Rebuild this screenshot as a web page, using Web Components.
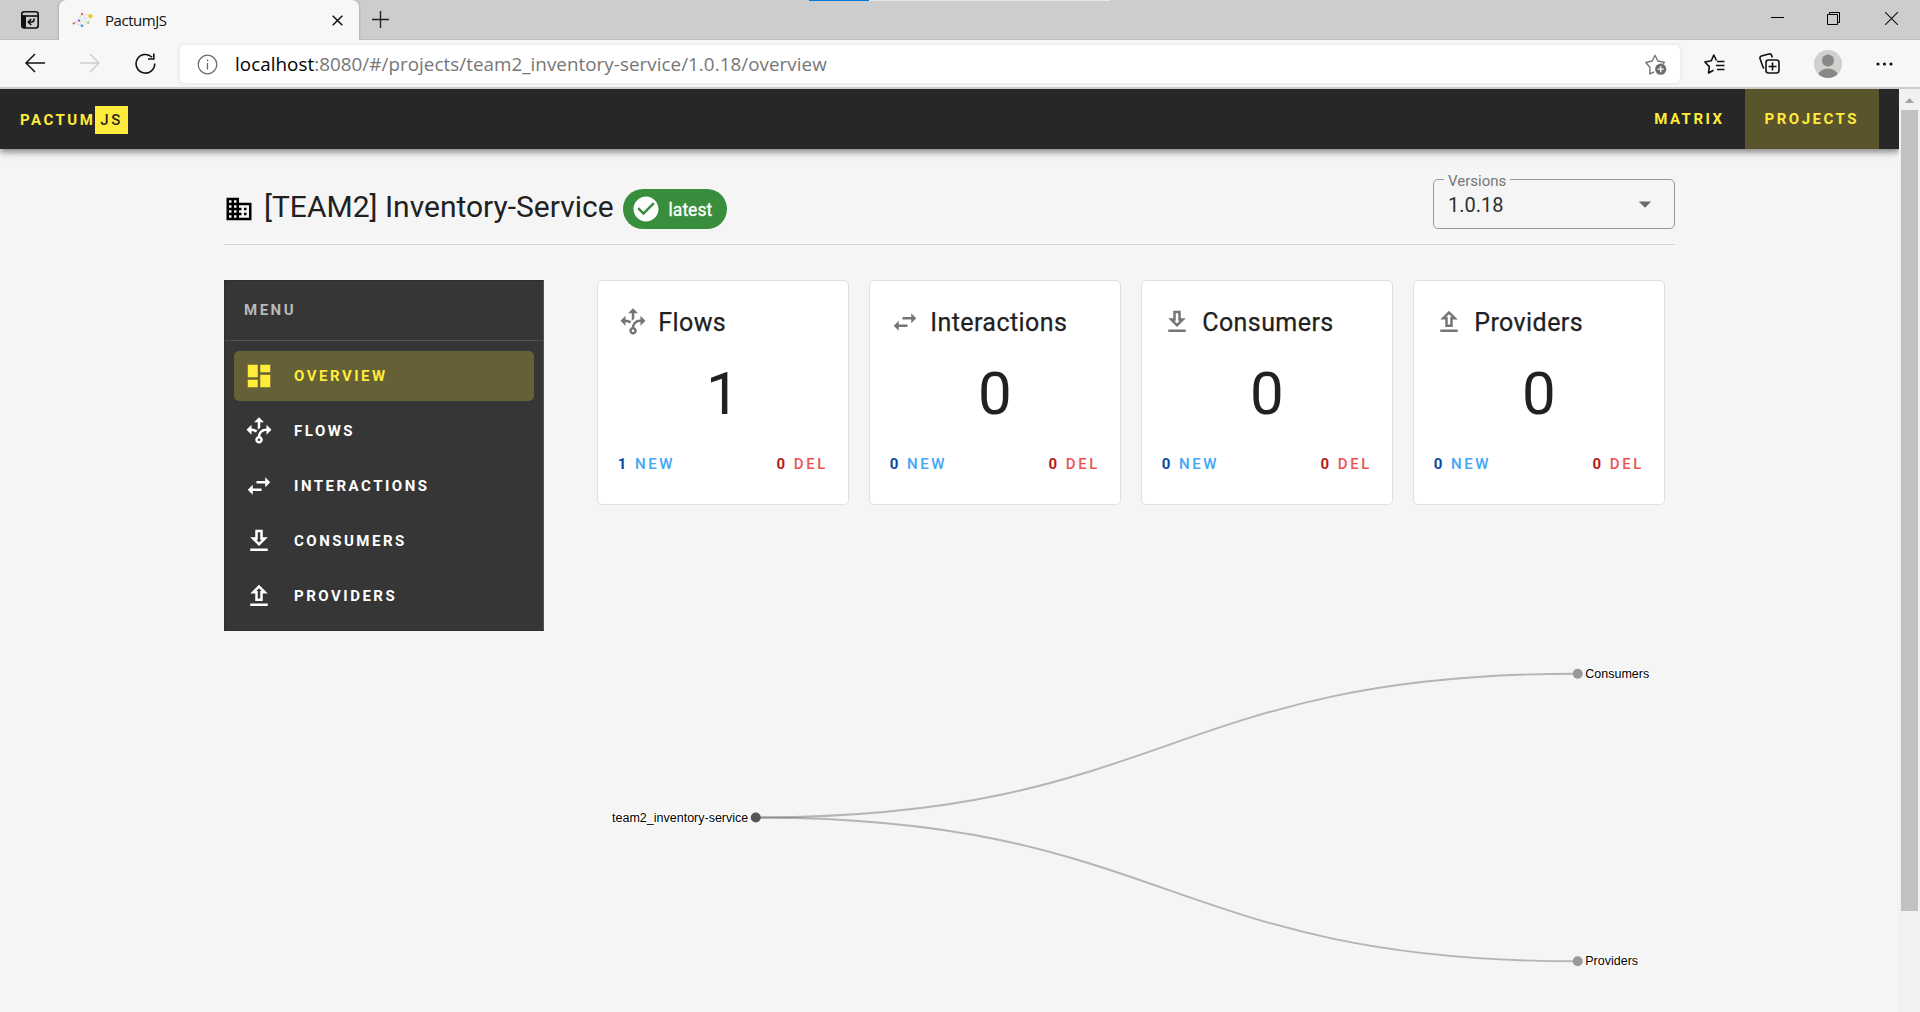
<!DOCTYPE html>
<html lang="en">
<head>
<meta charset="utf-8">
<title>PactumJS</title>
<style>
html,body{margin:0;height:100%;overflow:hidden;background:#f5f5f5;font-family:Roboto,sans-serif;color:#212121}
body{display:flex;flex-direction:column;height:1012px;width:1920px}
</style>
</head>
<body>
<tab-strip></tab-strip>
<address-bar></address-bar>
<page-frame>
  <app-bar></app-bar>
  <project-page>
    <project-header slot="header" name="[TEAM2] Inventory-Service" version="1.0.18"></project-header>
    <side-menu slot="menu">
      <menu-item icon="dashboard" active>OVERVIEW</menu-item>
      <menu-item icon="decision">FLOWS</menu-item>
      <menu-item icon="swap">INTERACTIONS</menu-item>
      <menu-item icon="download">CONSUMERS</menu-item>
      <menu-item icon="upload">PROVIDERS</menu-item>
    </side-menu>
    <stat-card icon="decision" total="1" added="1" removed="0">Flows</stat-card>
    <stat-card icon="swap" total="0" added="0" removed="0">Interactions</stat-card>
    <stat-card icon="download" total="0" added="0" removed="0">Consumers</stat-card>
    <stat-card icon="upload" total="0" added="0" removed="0">Providers</stat-card>
    <relation-graph slot="graph"></relation-graph>
  </project-page>
</page-frame>
<script>
const define = (name, html) => {
  customElements.define(name, class extends HTMLElement {
    constructor() {
      super();
      const t = document.createElement('template');
      t.innerHTML = '<style>:host,*{box-sizing:border-box}svg{display:block;flex:none}</style>' + (typeof html === 'function' ? html(this) : html);
      this.attachShadow({mode: 'open'}).appendChild(t.content.cloneNode(true));
    }
  });
};

const ICONS = {
  domain: 'M18,15H16V17H18M18,11H16V13H18M20,19H12V17H14V15H12V13H14V11H12V9H20M10,7H8V5H10M10,11H8V9H10M10,15H8V13H10M10,19H8V17H10M6,7H4V5H6M6,11H4V9H6M6,15H4V13H6M6,19H4V17H6M12,7V3H2V21H22V7H12Z',
  check: 'M12 2C6.5 2 2 6.5 2 12S6.5 22 12 22 22 17.5 22 12 17.5 2 12 2M10 17L5 12L6.41 10.59L10 14.17L17.59 6.58L19 8L10 17Z',
  down: 'M7,10L12,15L17,10H7Z',
  dashboard: 'M13,3V9H21V3M13,21H21V11H13M3,21H11V15H3M3,13H11V3H3V13Z',
  decision: 'M9.64,13.4C8.63,12.5 7.34,12.03 6,12V15L2,11L6,7V10C7.67,10 9.3,10.57 10.63,11.59C10.22,12.15 9.89,12.76 9.64,13.4M18,15V12C17.5,12 13.5,12.16 13.05,16.2C14.61,16.75 15.43,18.47 14.88,20.03C14.33,21.59 12.61,22.41 11.05,21.86C9.5,21.3 8.67,19.59 9.22,18.03C9.5,17.17 10.2,16.5 11.05,16.2C11.34,12.61 14.4,9.88 18,10V7L22,11L18,15M13,19A1,1 0 0,0 12,18A1,1 0 0,0 11,19A1,1 0 0,0 12,20A1,1 0 0,0 13,19M11,11.12C11.58,10.46 12.25,9.89 13,9.43V5H16L12,1L8,5H11V11.12Z',
  swap: 'M21,9L17,5V8H10V10H17V13M7,11L3,15L7,19V16H14V14H7V11Z',
  download: 'M13,5V11H14.17L12,13.17L9.83,11H11V5H13M15,3H9V9H5L12,16L19,9H15V3M19,18H5V20H19V18Z',
  upload: 'M9,10V16H15V10H19L12,3L5,10H9M12,5.8L14.2,8H13V14H11V8H9.8L12,5.8M19,18H5V20H19V18Z'
};

define('mdi-icon', el => `<style>:host{display:block;flex:none;width:30px;height:30px}</style>
<svg width="30" height="30" viewBox="0 0 24 24" fill="currentColor"><path d="${ICONS[el.getAttribute('name')]}"/></svg>`);

define('tab-strip', `<style>
:host{display:flex;flex:none;height:40px;background:#cdcdcd;box-shadow:inset 0 -1px #bdbdbd;font-family:"Open Sans","Noto Sans",sans-serif}
.side{width:59px;padding:11px 0 0 21px}
.tab{display:flex;align-items:center;width:300px;height:40px;background:#f7f7f7;border-radius:7px 7px 0 0;padding:0 16px 0 13px;box-shadow:0 0 3px rgba(0,0,0,.25)}
.title{flex:1;margin:-1px 0 0 11px;font-size:15px;line-height:20px;letter-spacing:-.45px;color:#111}
.new{margin:11px 0 0 13px}
.load{display:flex;width:301px;height:1px;background:#e5e5e5;margin-left:420px}
.load i{width:60px;background:#0078d7}
.win{display:flex;gap:43px;margin:12px 22px 0 auto}
.win :last-child{margin-left:2px}
</style>
<div class="side"><svg width="18" height="18" viewBox="0 0 18 18" fill="none" stroke="#111" stroke-width="1.6"><rect x=".8" y=".8" width="16.4" height="16.2" rx="2.5"/><path d="M1 5H17"/><path d="M1 4.5H5V17H2.5L1 15.5Z" fill="#111" stroke="none"/><path d="M13 7.5V8.5Q13 11 10.500 11H7.500M10.200 8L7.200 11L10.200 14"/></svg></div>
<div class="tab"><svg width="22" height="16" viewBox="0 0 22 16"><path d="M2 11L10 2L19 4L16 11L10 14ZM2 11L19 4M7 9L10 2L16 11L7 9L10 14M2 11L7 9" fill="none" stroke="#d6dbe0" stroke-width=".8"/><circle cx="18.500" cy="4" r="2.100" fill="#ffc400"/><circle cx="10" cy="2" r="1.200" fill="#f66b4d"/><circle cx="1.700" cy="11.500" r="1.100" fill="#e94b4b"/><circle cx="10" cy="13.700" r="1.300" fill="#2b97f5"/><circle cx="7" cy="8.500" r="1.100" fill="#a346c4"/><circle cx="16.500" cy="10.500" r="1.200" fill="#a8d080"/></svg>
<span class="title">PactumJS</span>
<svg width="11" height="11" viewBox="0 0 11 11" stroke="#111" stroke-width="1.5"><path d="M.7 .7L10.300 10.300M10.300 .7L.7 10.300"/></svg></div>
<svg class="new" width="17" height="17" viewBox="0 0 17 17" stroke="#222" stroke-width="1.4"><path d="M8.500 0V17M0 8.500H17"/></svg>
<div class="load"><i></i></div>
<div class="win">
<svg width="13" height="13" stroke="#000"><path d="M0 5.500H13"/></svg>
<svg width="13" height="13" fill="none" stroke="#000"><path d="M.5 2.500H10.500V12.500H.5ZM2.500 2.500V.5H12.500V10.500H10.500"/></svg>
<svg width="13" height="13" stroke="#111" stroke-width="1.100"><path d="M0 0L13 13M13 0L0 13"/></svg>
</div>`);

define('address-bar', `<style>
:host{display:flex;flex:none;align-items:center;height:49px;background:#f7f7f7;border-bottom:2px solid #ccc;padding:0 26px 0 25px;font-family:"Open Sans","Noto Sans",sans-serif}
.nav{display:flex;gap:35px;width:155px}
.url{display:flex;align-items:center;width:1500px;height:38px;margin-top:1px;background:#fff;border-radius:5px;padding:0 13px 0 17px;box-shadow:0 0 4px rgba(0,0,0,.1)}
.text{flex:1;margin:0 0 0 17px;font-size:18.800px;line-height:24px;letter-spacing:.055px;color:#767676}
.text b{font-weight:400;color:#000}
.tools{display:flex;align-items:center;margin-left:24px;gap:34px}
</style>
<div class="nav">
<svg width="20" height="20" viewBox="0 0 20 20" fill="none" stroke="#111" stroke-width="1.5"><path d="M20 10H1M10 1L1 10L10 19"/></svg>
<svg width="20" height="20" viewBox="0 0 20 20" fill="none" stroke="#cdcdcd" stroke-width="1.5"><path d="M0 10H19M10 1L19 10L10 19"/></svg>
<svg width="21" height="21" viewBox="0 0 21 21" fill="none" stroke="#111" stroke-width="1.600"><path d="M19.700 10.500A9.300 9.300 0 1 1 17 4.200M18.800 .5V6H13"/></svg>
</div>
<div class="url">
<svg width="21" height="21" viewBox="0 0 21 21" fill="none" stroke="#6b6b6b" stroke-width="1.300"><circle cx="10.500" cy="10.500" r="9.300"/><path d="M10.500 9V15.500M10.500 5.500V7.200"/></svg>
<span class="text"><b>localhost</b>:8080/#/projects/team2_inventory-service/1.0.18/overview</span>
<svg width="22" height="21" viewBox="0 0 22 21"><path d="M9 18L4.600 19.800L5 13.500L.9 8.500L7.200 7L10 1.200L12.800 7L19.300 8.300L18 10" fill="none" stroke="#777" stroke-width="1.400" stroke-linejoin="round"/><circle cx="15.700" cy="15.200" r="5.600" fill="#6e6e6e"/><path d="M12.700 15.200H18.700M15.700 12.200V18.200" stroke="#fff" stroke-width="1.300"/></svg>
</div>
<div class="tools">
<svg width="21" height="20" viewBox="0 0 21 20" fill="none" stroke="#111" stroke-width="1.600" stroke-linejoin="round"><path d="M9.500 16.300L4.500 19L5.300 12.600L.9 8L7.200 6.800L9.800 1L12.500 6.500M13 7.500H20.500M12 11.500H20.500M13 15.500H20.500"/></svg>
<svg width="21" height="21" viewBox="0 0 21 21" fill="none" stroke="#111" stroke-width="1.600"><rect x="7" y="7" width="13" height="13" rx="2.500"/><path d="M13.500 9.500V17.500M9.500 13.500H17.500M5 15.500Q4.200 14.800 3.800 13.500L1 5.500Q.6 3.700 2.400 3L9.800 1Q12 .5 12.600 2.200L13.300 4.500"/></svg>
<svg width="28" height="28" viewBox="0 0 28 28"><defs><clipPath id="a"><circle cx="14" cy="14" r="14"/></clipPath></defs><g clip-path="url(#a)"><rect width="28" height="28" fill="#d2d0ce"/><circle cx="14" cy="10.500" r="6" fill="#8a8886"/><ellipse cx="14" cy="26" rx="10" ry="7.500" fill="#8a8886"/></g></svg>
<svg width="17" height="4" fill="#111"><circle cx="2" cy="2" r="1.600"/><circle cx="8.500" cy="2" r="1.600"/><circle cx="15" cy="2" r="1.600"/></svg>
</div>`);

define('scroll-track', `<style>
:host{display:flex;flex:none;flex-direction:column;width:21px;background:#f1f1f1;padding:9px 2px 0}
svg{margin:0 auto 7px 4px}
i{height:801px;background:#c1c1c1}
</style><svg width="9" height="5" fill="#a3a3a3"><path d="M0 5L4.500 0L9 5Z"/></svg><i></i>`);

define('page-frame', `<style>
:host{display:flex;flex:1;min-height:0}
main{flex:1;display:flex;flex-direction:column;overflow:hidden}
</style><main><slot></slot></main><scroll-track></scroll-track>`);

define('app-bar', `<style>
:host{display:flex;flex:none;align-items:center;height:60px;background:#272727;color:#ffeb3b;padding:0 20px;box-shadow:0 2px 5px rgba(0,0,0,.3),0 5px 6px rgba(0,0,0,.14),0 1px 12px rgba(0,0,0,.12);position:relative;font-size:15px;font-weight:700;letter-spacing:2.500px}
.logo{display:flex;align-items:center;line-height:28px;padding-top:2px}
.logo span{background:#ffeb3b;color:#272727;font-weight:500;padding:0 5px}
nav{display:flex;margin-left:auto;height:60px;line-height:60px}
nav span{padding:0 20px}
nav .on{background:#5a542c}
</style>
<div class="logo">PACTUM<span>JS</span></div><nav><span>MATRIX</span><span class="on">PROJECTS</span></nav>`);

define('project-page', `<style>
:host{display:flex;flex-direction:column;padding:30px 224px 0}
.row{display:flex;margin-top:35px}
.menu{width:362.750px}
.cards{display:grid;grid-template-columns:repeat(4,252px);gap:20px;padding-left:10px}
.content{flex:1}
</style>
<slot name="header"></slot>
<div class="row"><div class="menu"><slot name="menu"></slot></div>
<div class="content"><div class="cards"><slot></slot></div><slot name="graph"></slot></div></div>`);

define('project-header', el => `<style>
:host{display:flex;justify-content:space-between;height:66px;border-bottom:1px solid #d6d6d6}
.name{display:flex;align-items:center;height:60px;color:#000}
h1{margin:0 0 5px 10px;font-size:30px;font-weight:400;line-height:40px;color:#212121}
</style>
<div class="name"><mdi-icon name="domain"></mdi-icon><h1>${el.getAttribute('name')}</h1><status-chip></status-chip></div>
<version-select>${el.getAttribute('version')}</version-select>`);

define('status-chip', `<style>
:host{display:flex;align-items:center;height:40px;margin-left:9px;padding:0 15px 0 8px;border-radius:20px;background:#388e3c;color:#fff;font-size:17.500px;line-height:22px}
span{margin:2px 0 0 8px;-webkit-text-stroke:.3px #fff}
</style><mdi-icon name="check"></mdi-icon><span>latest</span>`);

define('version-select', `<style>
:host{display:block}
fieldset{display:flex;align-items:center;justify-content:space-between;width:242px;height:61px;margin:-11px 0 0;padding:0 14px 8px 14px;border:1px solid #979797;border-radius:5px;font-size:20px;line-height:24px;color:#303030}
legend{font-size:15px;line-height:18px;padding:4px 4px 0;margin-left:-4px;color:#757575}
mdi-icon{color:#6b6b6b;margin-top:-3px}
</style><fieldset><legend>Versions</legend><span><slot></slot></span><mdi-icon name="down"></mdi-icon></fieldset>`);

define('side-menu', `<style>
:host{display:block;width:320px;height:351px;background:#363636;border:1px solid #303030;border-right-color:#555;padding-bottom:9px;font-size:15px;font-weight:700;letter-spacing:2.500px}
.head{height:60px;line-height:58px;padding-left:19px;border-bottom:1px solid #525252;color:#b9b9b9}
.items{display:grid;gap:5px;padding:10px 9px}
</style><div class="head">MENU</div><div class="items"><slot></slot></div>`);

define('menu-item', el => `<style>
:host{display:flex;align-items:center;height:50px;padding-left:10px;border-radius:5px;color:#fff}
:host([active]){background:#656036;color:#ffeb3b}
span{margin-left:20px;line-height:20px}
</style><mdi-icon name="${el.getAttribute('icon')}"></mdi-icon><span><slot></slot></span>`);

define('stat-card', el => `<style>
:host{display:flex;flex-direction:column;height:225px;padding:21px 20px 0;background:#fff;border:1px solid #e0e0e0;border-radius:5px}
.head{display:flex;align-items:center;height:40px;font-size:25px;letter-spacing:.42px;-webkit-text-stroke:.25px currentColor}
.head mdi-icon{color:#757575;margin-right:10.500px}
.total{margin-top:22px;height:60px;line-height:60px;font-size:60px;text-align:center}
.foot{display:flex;justify-content:space-between;margin-top:28px;height:24px;line-height:24px;font-size:15px;font-weight:500;letter-spacing:2.500px}
.new{color:#42a5f5}.del{color:#ef5350}
.new b{color:#0d47a1}.del b{color:#b71c1c}
</style>
<div class="head"><mdi-icon name="${el.getAttribute('icon')}"></mdi-icon><span><slot></slot></span></div>
<div class="total">${el.getAttribute('total')}</div>
<div class="foot"><span class="new"><b>${el.getAttribute('added')}</b> NEW</span><span class="del"><b>${el.getAttribute('removed')}</b> DEL</span></div>`);

define('relation-graph', `<style>
:host{display:block;height:507px}
text{font:12.500px "Liberation Sans",Arial,sans-serif;fill:#000;stroke:#fff;stroke-width:2px;paint-order:stroke;stroke-linejoin:round}
</style>
<svg width="1088" height="507" viewBox="586.750 505 1088 507">
<g fill="none" stroke="#555" stroke-opacity=".4" stroke-width="1.900"><path d="M755.500 817.500C1166.500 817.500 1166.500 673.700 1577.500 673.700"/><path d="M755.500 817.500C1166.500 817.500 1166.500 961.300 1577.500 961.300"/></g>
<circle cx="755.500" cy="817.500" r="5" fill="#555"/><circle cx="1577.500" cy="673.700" r="5" fill="#999"/><circle cx="1577.500" cy="961.300" r="5" fill="#999"/>
<text x="748" y="821.500" text-anchor="end">team2_inventory-service</text><text x="1585" y="677.700">Consumers</text><text x="1585" y="965.300">Providers</text>
</svg>`);
</script>
</body>
</html>
